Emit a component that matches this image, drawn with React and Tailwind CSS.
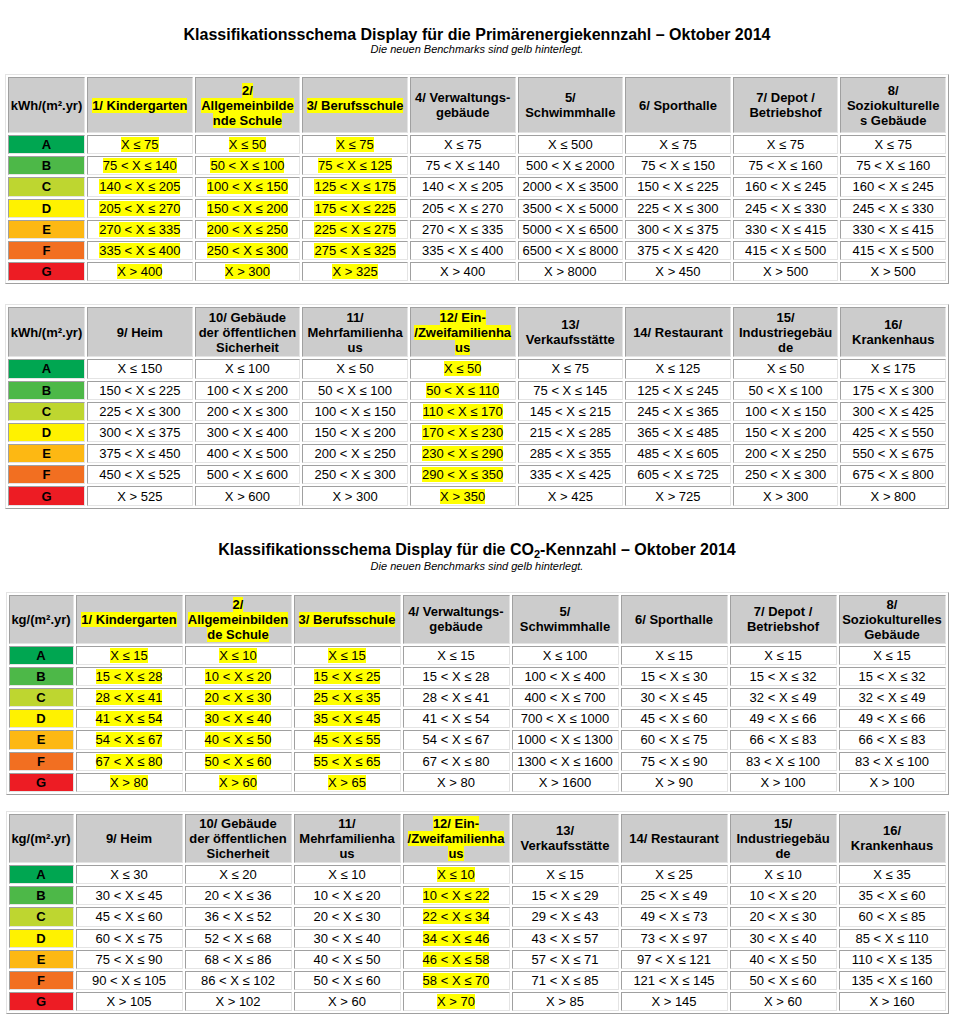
import React from "react";

// grenzwerte -> "X ≤ a", "a < X ≤ b", ..., "X > z"
const r = (...b) => [
  `X ≤ ${b[0]}`,
  ...b.slice(1).map((v, i) => `${b[i]} < X ≤ ${v}`),
  `X > ${b[b.length - 1]}`,
];

const labels = [
  { k: "A", bg: "bg-[#00a651]" },
  { k: "B", bg: "bg-[#4db848]" },
  { k: "C", bg: "bg-[#bed630]" },
  { k: "D", bg: "bg-[#fff200]" },
  { k: "E", bg: "bg-[#fdb813]" },
  { k: "F", bg: "bg-[#f26f21]" },
  { k: "G", bg: "bg-[#ed1c24]" },
];

const tables = [
  {
    unit: "kWh/(m².yr)",
    head: "h-[56px]",
    first: "w-[77px]",
    width: "w-[944px]",
    cols: [
      { h: ["1/ Kindergarten"], hl: true, v: r(75, 140, 205, 270, 335, 400) },
      { h: ["2/", "Allgemeinbilde", "nde Schule"], hl: true, v: r(50, 100, 150, 200, 250, 300) },
      { h: ["3/ Berufsschule"], hl: true, v: r(75, 125, 175, 225, 275, 325) },
      { h: ["4/ Verwaltungs-", "gebäude"], v: r(75, 140, 205, 270, 335, 400) },
      { h: ["5/", "Schwimmhalle"], v: r(500, 2000, 3500, 5000, 6500, 8000) },
      {
        h: ["6/ Sporthalle"],
        v: ["X ≤ 75", "75 < X ≤ 150", "150 < X ≤ 225", "225 < X ≤ 300", "300 < X ≤ 375", "375 < X ≤ 420", "X > 450"],
      },
      { h: ["7/ Depot /", "Betriebshof"], v: r(75, 160, 245, 330, 415, 500) },
      { h: ["8/", "Soziokulturelle", "s Gebäude"], v: r(75, 160, 245, 330, 415, 500) },
    ],
  },
  {
    unit: "kWh/(m².yr)",
    head: "h-[50px]",
    first: "w-[77px]",
    width: "w-[944px]",
    cols: [
      { h: ["9/ Heim"], v: r(150, 225, 300, 375, 450, 525) },
      { h: ["10/ Gebäude", "der öffentlichen", "Sicherheit"], v: r(100, 200, 300, 400, 500, 600) },
      { h: ["11/", "Mehrfamilienha", "us"], v: r(50, 100, 150, 200, 250, 300) },
      { h: ["12/ Ein-", "/Zweifamilienha", "us"], hl: true, v: r(50, 110, 170, 230, 290, 350) },
      {
        h: ["13/", "Verkaufsstätte"],
        v: ["X ≤ 75", "75 < X ≤ 145", "145 < X ≤ 215", "215 < X ≤ 285", "285 < X ≤ 355", "335 < X ≤ 425", "X > 425"],
      },
      { h: ["14/ Restaurant"], v: r(125, 245, 365, 485, 605, 725) },
      { h: ["15/", "Industriegebäu", "de"], v: r(50, 100, 150, 200, 250, 300) },
      { h: ["16/", "Krankenhaus"], v: r(175, 300, 425, 550, 675, 800) },
    ],
  },
  {
    unit: "kg/(m².yr)",
    head: "h-[49px]",
    first: "w-[65px]",
    width: "w-[943px]",
    cols: [
      { h: ["1/ Kindergarten"], hl: true, v: r(15, 28, 41, 54, 67, 80) },
      { h: ["2/", "Allgemeinbilden", "de Schule"], hl: true, v: r(10, 20, 30, 40, 50, 60) },
      { h: ["3/ Berufsschule"], hl: true, v: r(15, 25, 35, 45, 55, 65) },
      { h: ["4/ Verwaltungs-", "gebäude"], v: r(15, 28, 41, 54, 67, 80) },
      { h: ["5/", "Schwimmhalle"], v: r(100, 400, 700, 1000, 1300, 1600) },
      { h: ["6/ Sporthalle"], v: r(15, 30, 45, 60, 75, 90) },
      { h: ["7/ Depot /", "Betriebshof"], v: r(15, 32, 49, 66, 83, 100) },
      { h: ["8/", "Soziokulturelles", "Gebäude"], v: r(15, 32, 49, 66, 83, 100) },
    ],
  },
  {
    unit: "kg/(m².yr)",
    head: "h-[49px]",
    first: "w-[65px]",
    width: "w-[943px]",
    cols: [
      { h: ["9/ Heim"], v: r(30, 45, 60, 75, 90, 105) },
      { h: ["10/ Gebäude", "der öffentlichen", "Sicherheit"], v: r(20, 36, 52, 68, 86, 102) },
      { h: ["11/", "Mehrfamilienha", "us"], v: r(10, 20, 30, 40, 50, 60) },
      { h: ["12/ Ein-", "/Zweifamilienha", "us"], hl: true, v: r(10, 22, 34, 46, 58, 70) },
      { h: ["13/", "Verkaufsstätte"], v: r(15, 29, 43, 57, 71, 85) },
      { h: ["14/ Restaurant"], v: r(25, 49, 73, 97, 121, 145) },
      { h: ["15/", "Industriegebäu", "de"], v: r(10, 20, 30, 40, 50, 60) },
      { h: ["16/", "Krankenhaus"], v: r(35, 60, 85, 110, 135, 160) },
    ],
  },
];

const cell =
  "border border-solid border-t-[#a0a0a0] border-l-[#a0a0a0] border-r-[#e4e4e4] border-b-[#e4e4e4] text-center align-middle px-0 py-0 whitespace-nowrap";

const Lines = ({ lines }) =>
  lines.map((l, i) => (
    <React.Fragment key={i}>
      {i > 0 && <br />}
      {l}
    </React.Fragment>
  ));

const Table = ({ t, className }) => (
  <table
    className={`${t.width} ${className} mx-auto table-fixed border-separate border-spacing-[2px] border border-solid border-t-[#e4e4e4] border-l-[#e4e4e4] border-r-[#a0a0a0] border-b-[#a0a0a0] text-[13px] leading-[15px] text-black`}
  >
    <colgroup>
      <col className={t.first} />
      {t.cols.map((c, i) => (
        <col key={i} />
      ))}
    </colgroup>
    <thead>
      <tr>
        <th className={`${cell} ${t.head} bg-[#cccccc] font-bold`}>{t.unit}</th>
        {t.cols.map((c, i) => (
          <th key={i} className={`${cell} ${t.head} bg-[#cccccc] font-bold`}>
            {c.hl ? (
              <span className="bg-[#ffff00]">
                <Lines lines={c.h} />
              </span>
            ) : (
              <Lines lines={c.h} />
            )}
          </th>
        ))}
      </tr>
    </thead>
    <tbody>
      {labels.map((l, ri) => (
        <tr key={l.k}>
          <td className={`${cell} h-[19.2px] ${l.bg} font-bold`}>{l.k}</td>
          {t.cols.map((c, i) => (
            <td key={i} className={`${cell} h-[19.2px] bg-white`}>
              {c.hl ? <span className="bg-[#ffff00]">{c.v[ri]}</span> : c.v[ri]}
            </td>
          ))}
        </tr>
      ))}
    </tbody>
  </table>
);

const Title = ({ children }) => (
  <div className="text-center text-black">
    <div className="text-[16px] font-bold leading-[17px]">{children}</div>
    <div className="text-[11px] italic leading-[12px]">Die neuen Benchmarks sind gelb hinterlegt.</div>
  </div>
);

export default function App() {
  return (
    <div className="w-[954px] min-h-[1030px] bg-white pt-[26px] font-['Liberation_Sans',Arial,sans-serif]">
      <Title>Klassifikationsschema Display für die Primärenergiekennzahl – Oktober 2014</Title>
      <Table t={tables[0]} className="mt-[19px]" />
      <Table t={tables[1]} className="mt-[20px]" />

      <div className="mt-[32px]">
        <Title>
          Klassifikationsschema Display für die CO
          <span className="relative top-[3px] text-[11px]">2</span>
          -Kennzahl – Oktober 2014
        </Title>
      </div>
      <Table t={tables[2]} className="mt-[20px]" />
      <Table t={tables[3]} className="mt-[16px]" />
    </div>
  );
}
